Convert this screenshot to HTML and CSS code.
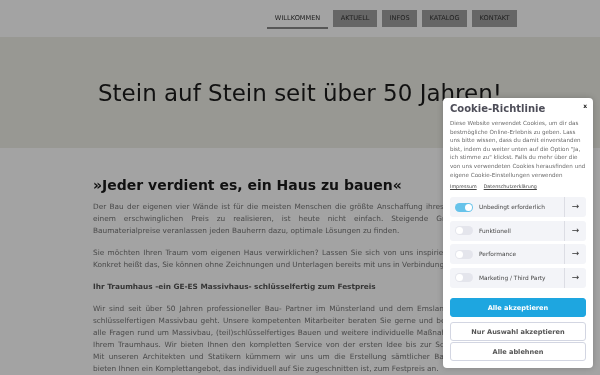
FILE: index.html
```html
<!DOCTYPE html>
<html lang="de">
<head>
  <meta charset="UTF-8" />
  <title>GE-ES Massivhaus</title>
  <link rel="stylesheet" href="styles.css">
</head>
<body>

  <div class="site">
    <header class="topbar">
      <nav class="menu">
        <a class="menu-item active" href="#">Willkommen</a>
        <a class="menu-item" href="#">Aktuell</a>
        <a class="menu-item" href="#">Infos</a>
        <a class="menu-item" href="#">Katalog</a>
        <a class="menu-item" href="#">Kontakt</a>
      </nav>
    </header>

    <section class="hero">
      <h1>Stein auf Stein seit über 50 Jahren!</h1>
    </section>

    <main class="content">
      <h2>»Jeder verdient es, ein Haus zu bauen«</h2>
      <p>Der Bau der eigenen vier Wände ist für die meisten Menschen die größte Anschaffung ihres Lebens. Dies zu einem erschwinglichen Preis zu realisieren, ist heute nicht einfach. Steigende Grundstücks- und Baumaterialpreise veranlassen jeden Bauherrn dazu, optimale Lösungen zu finden.</p>
      <p>Sie möchten Ihren Traum vom eigenen Haus verwirklichen? Lassen Sie sich von uns inspirieren und beraten. Konkret heißt das, Sie können ohne Zeichnungen und Unterlagen bereits mit uns in Verbindung treten.</p>
      <h3>Ihr Traumhaus -ein GE-ES Massivhaus- schlüsselfertig zum Festpreis</h3>
      <p>Wir sind seit über 50 Jahren professioneller Bau- Partner im Münsterland und dem Emsland, sobald es um schlüsselfertigen Massivbau geht. Unsere kompetenten Mitarbeiter beraten Sie gerne und beantworten Ihnen alle Fragen rund um Massivbau, (teil)schlüsselfertiges Bauen und weitere individuelle Maßnahmen hinsichtlich Ihrem Traumhaus. Wir bieten Ihnen den kompletten Service von der ersten Idee bis zur Schlüsselübergabe. Mit&nbsp;unseren Architekten und Statikern kümmern wir uns um die Erstellung sämtlicher Bauunterlagen und bieten&nbsp;Ihnen ein Komplettangebot, das individuell auf Sie zugeschnitten ist, zum Festpreis an.</p>
    </main>
  </div>

  <div class="cookie-overlay"></div>

  <div class="cookie-box">
    <span class="cookie-close">x</span>
    <div class="cookie-title">Cookie-Richtlinie</div>
    <p class="cookie-text">Diese Website verwendet Cookies, um dir das bestmögliche Online-Erlebnis zu geben. Lass uns bitte wissen, dass du damit einverstanden bist, indem du weiter unten auf die Option "Ja, ich stimme zu" klickst. Falls du mehr über die von uns verwendeten Cookies herausfinden und eigene Cookie-Einstellungen verwenden</p>
    <div class="cookie-links">
      <a href="#">Impressum</a>
      <a href="#">Datenschutzerklärung</a>
    </div>

    <div class="cookie-groups">
      <div class="cookie-group">
        <span class="toggle on"></span>
        <span class="group-label">Unbedingt erforderlich</span>
        <span class="group-arrow">&rarr;</span>
      </div>
      <div class="cookie-group">
        <span class="toggle"></span>
        <span class="group-label">Funktionell</span>
        <span class="group-arrow">&rarr;</span>
      </div>
      <div class="cookie-group">
        <span class="toggle"></span>
        <span class="group-label">Performance</span>
        <span class="group-arrow">&rarr;</span>
      </div>
      <div class="cookie-group">
        <span class="toggle"></span>
        <span class="group-label">Marketing / Third Party</span>
        <span class="group-arrow">&rarr;</span>
      </div>
    </div>

    <button class="cookie-btn primary">Alle akzeptieren</button>
    <button class="cookie-btn">Nur Auswahl akzeptieren</button>
    <button class="cookie-btn tight">Alle ablehnen</button>
  </div>

</body>
</html>
```

FILE: styles.css
```css
body {
  margin: 0;
  font-family: "DejaVu Sans", sans-serif;
  background: #fff;
  overflow: hidden;
}

.site {
  filter: blur(0.4px);
}

.topbar {
  height: 37px;
  background: #fff;
}

.menu {
  width: 434px;
  margin: 0 auto;
  display: flex;
  justify-content: flex-end;
  gap: 5px;
  padding-top: 10px;
}

.menu-item {
  display: block;
  height: 17px;
  line-height: 17px;
  padding: 0 7.5px;
  font-size: 6.6px;
  text-transform: uppercase;
  color: #333;
  text-decoration: none;
  background: #a0a0a0;
}

.menu-item.active {
  background: none;
  padding: 0 8px;
  border-bottom: 2px solid #888;
}

.hero {
  height: 111px;
  background: #eeeee6;
  display: flex;
  align-items: center;
  justify-content: center;
}

.hero h1 {
  margin: 0;
  font-weight: normal;
  font-size: 23px;
  color: #1c1c1c;
}

.content {
  width: 414px;
  margin: 0 auto;
  padding: 28px 10px 0;
  color: #747474;
  font-size: 7.35px;
  line-height: 12px;
}

.content h2 {
  margin: 0 0 7px;
  font-size: 14px;
  line-height: 18px;
  color: #1c1c1c;
}

.content h3 {
  margin: 0 0 10px;
  font-size: 7.35px;
  color: #555;
}

.content p {
  margin: 0 0 10px;
  text-align: justify;
}

.cookie-overlay {
  position: fixed;
  inset: 0;
  background: rgba(0, 0, 0, 0.36);
}

.cookie-box {
  position: fixed;
  top: 98px;
  left: 443px;
  width: 136px;
  padding: 5px 7px 7px;
  background: #fff;
  border-radius: 4px;
  box-shadow: 0 0 6px rgba(0, 0, 0, 0.2);
}

.cookie-close {
  position: absolute;
  top: 4px;
  right: 6px;
  font-size: 6px;
  font-weight: bold;
  color: #222;
}

.cookie-title {
  font-size: 10px;
  line-height: 12px;
  font-weight: bold;
  color: #4d4d58;
}

.cookie-text {
  margin: 4px 0 0;
  font-size: 5.6px;
  line-height: 8.6px;
  color: #6a6a6a;
}

.cookie-links {
  display: flex;
  gap: 7px;
  margin-top: 4px;
  height: 8px;
  line-height: 8px;
}

.cookie-links a {
  font-size: 4.8px;
  color: #444;
}

.cookie-groups {
  margin-top: 6px;
  display: flex;
  flex-direction: column;
  gap: 3.5px;
}

.cookie-group {
  display: flex;
  align-items: center;
  height: 20px;
  padding-left: 5px;
  background: #f3f4f8;
  border-radius: 3px;
}

.toggle {
  position: relative;
  width: 18px;
  height: 9px;
  border-radius: 5px;
  background: #e4e5ec;
}

.toggle::after {
  content: "";
  position: absolute;
  top: 1px;
  left: 1px;
  width: 7px;
  height: 7px;
  border-radius: 50%;
  background: #fff;
}

.toggle.on {
  background: #67c3ea;
}

.toggle.on::after {
  left: 10px;
}

.group-label {
  flex: 1;
  margin-left: 6px;
  font-size: 5.85px;
  color: #444;
}

.group-arrow {
  width: 21px;
  height: 20px;
  line-height: 19px;
  text-align: center;
  border-left: 1px solid #dcdde4;
  font-size: 9px;
  color: #333;
}

.cookie-btn {
  display: block;
  width: 100%;
  height: 19px;
  margin-top: 5px;
  padding: 0;
  font-family: "DejaVu Sans", sans-serif;
  font-size: 6.6px;
  font-weight: bold;
  color: #555;
  background: #fff;
  border: 1px solid #d3d6e2;
  border-radius: 3px;
}

.cookie-btn.primary {
  margin-top: 10.5px;
  color: #fff;
  background: #1ea6e0;
  border-color: #1ea6e0;
}

.cookie-btn.tight {
  margin-top: 1px;
}
```
